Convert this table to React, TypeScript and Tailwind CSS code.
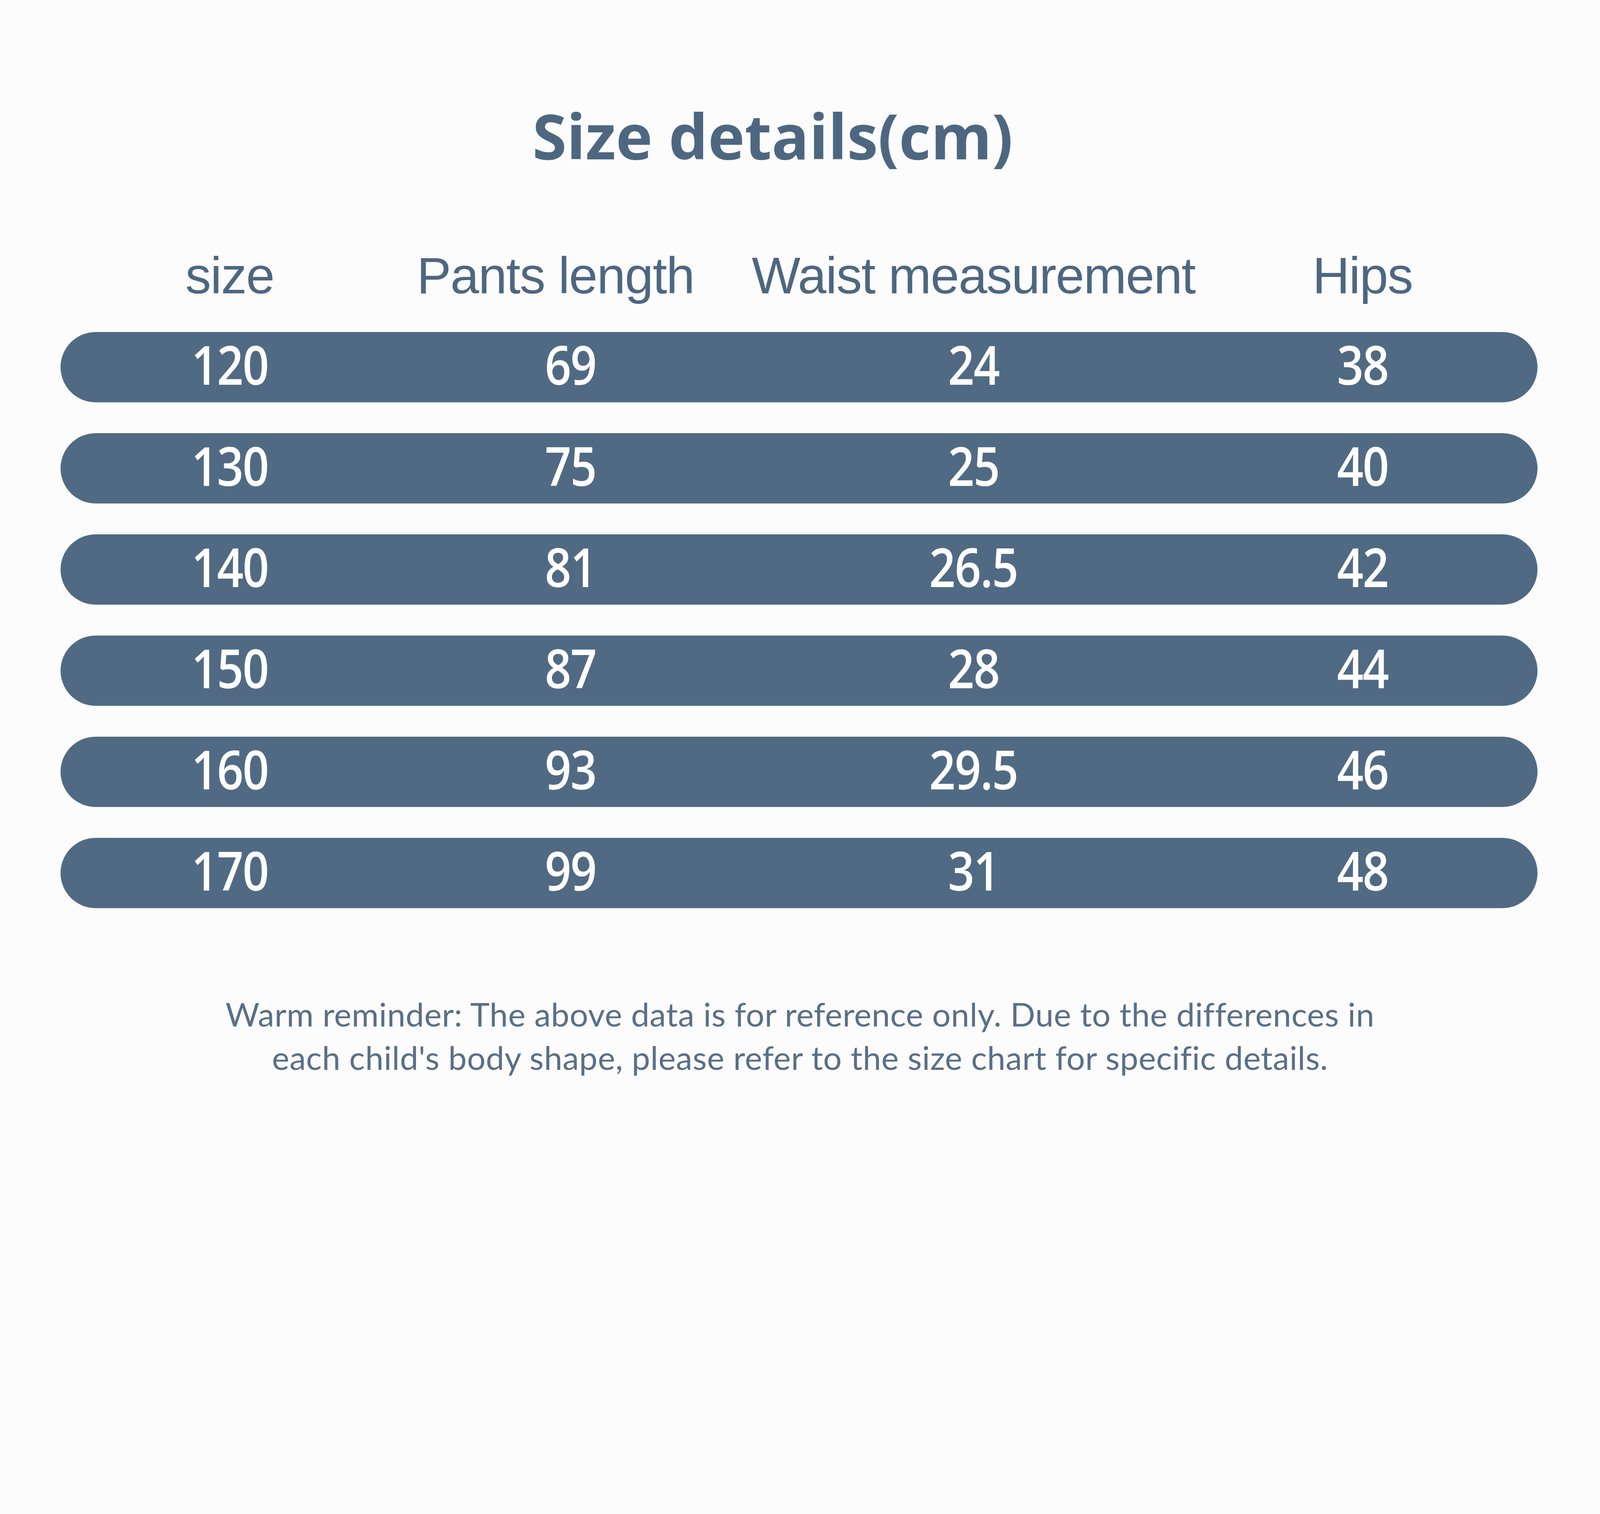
const rows = [
  { size: "120", pants: "69", waist: "24", hips: "38" },
  { size: "130", pants: "75", waist: "25", hips: "40" },
  { size: "140", pants: "81", waist: "26.5", hips: "42" },
  { size: "150", pants: "87", waist: "28", hips: "44" },
  { size: "160", pants: "93", waist: "29.5", hips: "46" },
  { size: "170", pants: "99", waist: "31", hips: "48" },
];

const cols = "grid grid-cols-[866px_878px_1186px_806px]";

function Cell({ value }: { value: string }) {
  return (
    <div className="text-center">
      <span className="inline-block scale-x-[0.86] tracking-[-0.02em]">{value}</span>
    </div>
  );
}

export default function App() {
  return (
    <div className="w-full min-h-screen bg-[#fcfcfc] flex flex-col">
      {/* title */}
      <div className="pt-[267px] flex justify-center pr-[140px]">
        <h1 className="font-['Open_Sans',sans-serif] font-bold text-[159px] leading-[159px] text-[#4e6780]">
          Size details(cm)
        </h1>
      </div>

      {/* header row */}
      <div className={`${cols} mt-[214px] ml-[155px] w-[3781px] font-['Liberation_Sans',Arial,sans-serif] text-[132px] leading-[132px] tracking-[-0.015em] text-[#4e6780]`}>
        <div className="text-center">size</div>
        <div className="text-center pr-[76px]">Pants length</div>
        <div className="text-center">Waist measurement</div>
        <div className="text-center">Hips</div>
      </div>

      {/* bars */}
      <div className="mt-[78px] ml-[155px] w-[3781px] flex flex-col gap-[79px]">
        {rows.map((r) => (
          <div
            key={r.size}
            className={`${cols} h-[180px] rounded-full bg-[#516a84] items-center pb-[18px] font-['Open_Sans',sans-serif] font-semibold text-[138px] leading-none text-white`}
          >
            <Cell value={r.size} />
            <Cell value={r.pants} />
            <Cell value={r.waist} />
            <Cell value={r.hips} />
          </div>
        ))}
      </div>

      {/* footer note */}
      <div className="mt-[215px] text-center font-['Lato',sans-serif] text-[84px] leading-[111px] tracking-[0.008em] text-[#5a6f87]">
        <p>Warm reminder: The above data is for reference only. Due to the differences in</p>
        <p>each child's body shape, please refer to the size chart for specific details.</p>
      </div>
    </div>
  );
}
